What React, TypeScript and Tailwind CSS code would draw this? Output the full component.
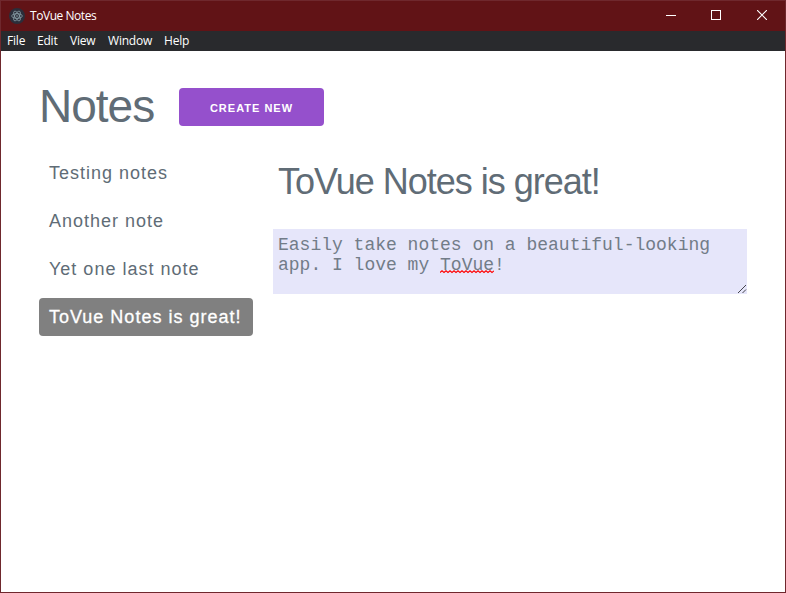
const menuItems = [
  { label: 'File', width: 'w-[30px]' },
  { label: 'Edit', width: 'w-[33px]' },
  { label: 'View', width: 'w-[38px]' },
  { label: 'Window', width: 'w-[56px]' },
  { label: 'Help', width: 'w-[30px]' },
];

const notes = ['Testing notes', 'Another note', 'Yet one last note', 'ToVue Notes is great!'];
const selected = 3;

const squiggle =
  'M0 2.5' + Array.from({ length: 27 }, (_, i) => `L${i * 2 + 2} ${i % 2 ? 2.5 : 0.8}`).join('');

function AppIcon() {
  return (
    <svg width="16" height="16" viewBox="0 0 16 16" fill="none">
      <circle cx="8" cy="8" r="8" fill="#2b2e3a" />
      <g stroke="#a9c4cc" strokeOpacity="0.75" strokeWidth="0.75">
        <ellipse cx="8" cy="8" rx="5.4" ry="2.3" transform="rotate(0 8 8)" />
        <ellipse cx="8" cy="8" rx="5.4" ry="2.3" transform="rotate(60 8 8)" />
        <ellipse cx="8" cy="8" rx="5.4" ry="2.3" transform="rotate(120 8 8)" />
      </g>
      <circle cx="8" cy="8" r="0.7" fill="#a9c4cc" />
    </svg>
  );
}

function TitleBar() {
  return (
    <header className="flex h-[30px] items-center bg-[#611316] pl-2 text-white">
      <AppIcon />
      <span className="ml-[5px] font-['Open_Sans','Noto_Sans',sans-serif] text-[12px] leading-4 tracking-[-0.45px]">ToVue Notes</span>
      <div className="ml-auto flex h-full pb-[2px]">
        <span className="flex w-[44px] items-center justify-center">
          <svg width="10" height="10" shapeRendering="crispEdges"><path d="M0 5.5H10" stroke="white" /></svg>
        </span>
        <span className="flex w-[46px] items-center justify-center">
          <svg width="10" height="10" shapeRendering="crispEdges"><path d="M.5 .5H9.5V9.5H.5Z" stroke="white" fill="none" /></svg>
        </span>
        <span className="flex w-[46px] items-center justify-center">
          <svg width="10" height="10"><path d="M0 0L10 10M10 0L0 10" stroke="white" strokeWidth="1.1" /></svg>
        </span>
      </div>
    </header>
  );
}

function MenuBar() {
  return (
    <nav className="flex h-5 items-center bg-[#292a2d] pl-[6px] font-['Open_Sans','Noto_Sans',sans-serif] text-[12px] leading-4 tracking-[-0.2px] text-white">
      {menuItems.map((m) => (
        <span key={m.label} className={m.width}>{m.label}</span>
      ))}
    </nav>
  );
}

export default function App() {
  return (
    <div className="flex h-[593px] w-[786px] flex-col overflow-hidden border border-[#6f282d] bg-white font-['Liberation_Sans',Arial,sans-serif] text-[#606c76]">
      <TitleBar />
      <MenuBar />
      <main className="flex flex-col px-[38px] pt-[27px]">
        <div className="flex h-[56px] items-center">
          <h1 className="w-[140px] text-[46px] leading-[56px] font-light tracking-[-1px]">Notes</h1>
          <button className="mt-[2px] h-[38px] w-[145px] rounded-[4px] bg-[#9550cc] text-center text-[11px] leading-[40px] font-bold tracking-[1px] whitespace-nowrap text-white uppercase">
            Create new
          </button>
        </div>
        <div className="mt-5 flex gap-5">
          <ul className="flex w-[214px] flex-col gap-[10px]">
            {notes.map((n, i) => (
              <li
                key={n}
                className={
                  'h-[38px] rounded-[4px] pl-[10px] text-[18px] leading-[38px] tracking-[1px] whitespace-nowrap ' +
                  (i === selected ? 'bg-[#808080] text-white [-webkit-text-stroke:0.3px_white]' : '')
                }
              >
                {n}
              </li>
            ))}
          </ul>
          <section className="flex w-[474px] flex-col">
            <h2 className="mt-[5px] pl-[5px] text-[36px] leading-[46px] tracking-[-1px] whitespace-nowrap">ToVue Notes is great!</h2>
            <div className="mt-6 flex h-[65px] items-end justify-between bg-[#e6e6fa] font-['Liberation_Mono','Courier_New',monospace] text-[18px] leading-5 text-[#727c88]">
              <div className="h-full pt-[6px] pl-[5px] whitespace-pre">
                <p>Easily take notes on a beautiful-looking</p>
                <p className="flex">
                  <span>{'app. I love my '}</span>
                  <span className="relative">
                    ToVue
                    <svg width="54" height="4" fill="none" stroke="#ff0000" className="absolute bottom-[1px] left-0">
                      <path d={squiggle} strokeWidth="1.1" />
                    </svg>
                  </span>
                  <span>!</span>
                </p>
              </div>
              <svg width="10" height="10" fill="none" stroke="#44444c" className="shrink-0">
                <path d="M1 9L9 1M5.5 9L9 5.5" />
              </svg>
            </div>
          </section>
        </div>
      </main>
    </div>
  );
}
